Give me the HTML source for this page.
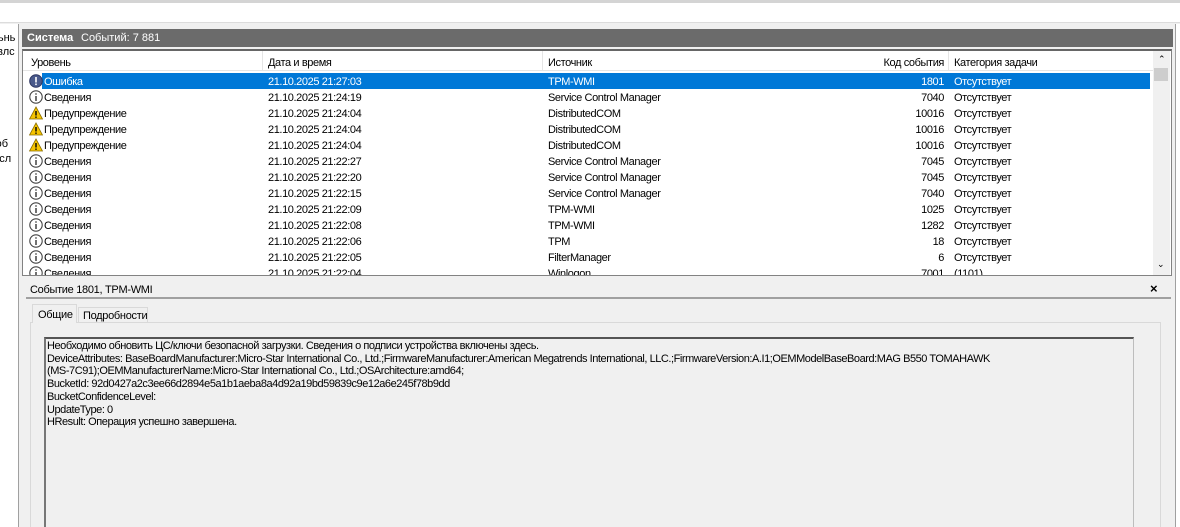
<!DOCTYPE html>
<html><head><meta charset="utf-8"><style>
*{margin:0;padding:0;box-sizing:border-box}
html,body{width:1180px;height:527px;overflow:hidden}
body{background:#f0f0f0;font-family:"Liberation Sans",sans-serif;font-size:11px;color:#000;position:relative}
.a{position:absolute;white-space:nowrap}
.row{position:absolute;left:0;height:16px;width:1128px;letter-spacing:-0.4px}
.row span{position:absolute;top:3px}
.sel{background:#0078d7;color:#fff}
</style></head><body>
<div class="a" style="left:0;top:0;width:1180px;height:3px;background:#d4d4d4"></div>
<div class="a" style="left:0;top:3px;width:1180px;height:20px;background:#fff;border-bottom:1px solid #dcdcdc"></div>
<div class="a" style="left:0;top:24px;width:19px;height:503px;background:#fff;border-right:1px solid #a0a0a0;overflow:hidden;font-size:11px">
<div class="a" style="left:-8px;top:8px">вьнь</div>
<div class="a" style="left:-9px;top:22px">авлс</div>
<div class="a" style="left:-10px;top:114px">соб</div>
<div class="a" style="left:-10px;top:129px">и сл</div>
</div>
<div class="a" style="left:1175px;top:24px;width:5px;height:503px;background:#fff;border-left:1px solid #a0a0a0"></div>
<div class="a" style="left:22px;top:29px;width:1151px;height:18px;background:#6b6b6b;color:#fff;font-size:11px">
<span class="a" style="left:5px;top:3px;font-weight:bold">Система</span>
<span class="a" style="left:59px;top:3px">Событий: 7 881</span></div>
<div class="a" style="left:22px;top:49px;width:1150px;height:227px;background:#fff;border:1px solid #828282;border-top:2px solid #666;overflow:hidden">
<div class="a" style="left:0;top:0;width:1130px;height:20px;border-bottom:1px solid #e5e5e5;letter-spacing:-0.4px">
<span class="a" style="left:8px;top:6px">Уровень</span>
<span class="a" style="left:239px;top:0;height:20px;border-left:1px solid #e5e5e5"></span>
<span class="a" style="left:245px;top:6px">Дата и время</span>
<span class="a" style="left:519px;top:0;height:20px;border-left:1px solid #e5e5e5"></span>
<span class="a" style="left:525px;top:6px">Источник</span>
<span class="a" style="left:921px;top:6px;transform:translateX(-100%)">Код события</span>
<span class="a" style="left:925px;top:0;height:20px;border-left:1px solid #e5e5e5"></span>
<span class="a" style="left:931px;top:6px">Категория задачи</span>
</div>
<div id="rows"></div>
<div class="a" style="left:1130px;top:0;width:17px;height:225px;background:#f0f0f0">
<div class="a" style="left:5px;top:3px;font-size:9px">&#8963;</div>
<div class="a" style="left:1px;top:17px;width:14px;height:13px;background:#cdcdcd"></div>
<div class="a" style="left:4px;top:208px;font-size:9px">&#8964;</div>
</div>
</div>
<div class="a" style="left:26px;top:280px;width:1145px;height:19px;border-bottom:2px solid #a0a0a0;letter-spacing:-0.3px">
<span class="a" style="left:4px;top:4px">Событие 1801, TPM-WMI</span>
<span class="a" style="left:1124px;top:1px;font-weight:bold;font-size:13px">×</span></div>
<div class="a" style="left:30px;top:322px;width:1131px;height:210px;background:#f0f0f0;border:1px solid #d9d9d9"></div>
<div class="a" style="left:32px;top:304px;width:45px;height:19px;background:#f0f0f0;border:1px solid #d9d9d9;border-bottom:none;letter-spacing:-0.3px"><span class="a" style="left:5px;top:4px">Общие</span></div>
<div class="a" style="left:78px;top:307px;width:70px;height:16px;background:#f0f0f0;border:1px solid #d9d9d9;letter-spacing:-0.3px"><span class="a" style="left:4px;top:2px">Подробности</span></div>
<div class="a" style="left:44px;top:337px;width:1090px;height:200px;border:1px solid #bdbdbd;border-top:2px solid #555;border-left:2px solid #777"></div>
<div class="a" style="left:47px;top:340px;line-height:12.7px;letter-spacing:-0.45px">Необходимо обновить ЦС/ключи безопасной загрузки. Сведения о подписи устройства включены здесь.<br>DeviceAttributes: BaseBoardManufacturer:Micro-Star International Co., Ltd.;FirmwareManufacturer:American Megatrends International, LLC.;FirmwareVersion:A.I1;OEMModelBaseBoard:MAG B550 TOMAHAWK<br>(MS-7C91);OEMManufacturerName:Micro-Star International Co., Ltd.;OSArchitecture:amd64;<br>BucketId: 92d0427a2c3ee66d2894e5a1b1aeba8a4d92a19bd59839c9e12a6e245f78b9dd<br>BucketConfidenceLevel:<br>UpdateType: 0<br>HResult: Операция успешно завершена.</div>
<script>
var d=[["e","Ошибка","21:27:03","TPM-WMI","1801"],["i","Сведения","21:24:19","Service Control Manager","7040"],["w","Предупреждение","21:24:04","DistributedCOM","10016"],["w","Предупреждение","21:24:04","DistributedCOM","10016"],["w","Предупреждение","21:24:04","DistributedCOM","10016"],["i","Сведения","21:22:27","Service Control Manager","7045"],["i","Сведения","21:22:20","Service Control Manager","7045"],["i","Сведения","21:22:15","Service Control Manager","7040"],["i","Сведения","21:22:09","TPM-WMI","1025"],["i","Сведения","21:22:08","TPM-WMI","1282"],["i","Сведения","21:22:06","TPM","18"],["i","Сведения","21:22:05","FilterManager","6"],["i","Сведения","21:22:04","Winlogon","7001","(1101)"]];
var h="";
d.forEach(function(r,k){var t=22+k*16;
var ic=r[0]=="w"?'<svg class="a" style="left:6px;top:1px" width="14" height="14"><path d="M7 1L13.5 13H0.5Z" fill="#f5c400" stroke="#8a6d00" stroke-width="0.8"/><rect x="6.3" y="5" width="1.4" height="4.5" fill="#000"/><rect x="6.3" y="10.5" width="1.4" height="1.4" fill="#000"/></svg>':
r[0]=="e"?'<svg class="a" style="left:6px;top:1px" width="14" height="14"><circle cx="7" cy="7" r="6.3" fill="#4a5a8c" stroke="#2c3560"/><rect x="6.2" y="3" width="1.6" height="5.5" fill="#fff"/><rect x="6.2" y="9.5" width="1.6" height="1.6" fill="#fff"/></svg>':
'<svg class="a" style="left:6px;top:1px" width="14" height="14"><circle cx="7" cy="7" r="6.2" fill="#fff" stroke="#444" stroke-width="1.1"/><rect x="6.3" y="6" width="1.4" height="5" fill="#333"/><rect x="6.3" y="3.3" width="1.4" height="1.4" fill="#333"/></svg>';
var c=k==0?'color:#fff':'';
h+='<div class="row" style="top:'+t+'px">'+(k==0?'<div class="a sel" style="left:19px;top:0;width:1108px;height:16px"></div>':'')+ic+
'<span style="left:21px;'+c+'">'+r[1]+'</span><span style="left:245px;'+c+'">21.10.2025 '+r[2]+'</span><span style="left:525px;'+c+'">'+r[3]+'</span><span style="left:921px;transform:translateX(-100%);'+c+'">'+r[4]+'</span><span style="left:931px;'+c+'">'+(r[5]||"Отсутствует")+'</span></div>';});
document.getElementById("rows").innerHTML=h;
</script>
</body></html>
